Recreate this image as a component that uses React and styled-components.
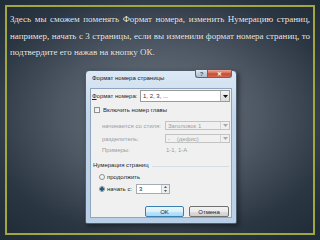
import React from "react"
import styled, { createGlobalStyle, css } from "styled-components"

const GlobalStyle = createGlobalStyle`
  html, body {
    margin: 0;
    padding: 0;
    background: #26313d;
  }
`

const Slide = styled.div`
  width: 320px;
  height: 240px;
  box-sizing: border-box;
  padding: 5px;
  background: radial-gradient(ellipse 70% 65% at 50% 48%, #6e7780 0%, #4e5864 45%, #2b3643 80%, #222d3a 100%);
`

const Frame = styled.div`
  height: 100%;
  box-sizing: border-box;
  border: 2px solid #a2a63e;
  padding: 4px 3px 0 3px;
`

const Paragraph = styled.p`
  margin: 0;
  font-family: "Liberation Serif", "Times New Roman", serif;
  font-size: 9px;
  line-height: 16.5px;
  text-align: justify;
  color: #ebebeb;
  text-shadow: 0 0 1px rgba(0, 0, 0, 0.5);
`

const Dialog = styled.div`
  margin: 9.5px 0 0 75px;
  width: 152px;
  height: 154px;
  box-sizing: border-box;
  display: flex;
  flex-direction: column;
  padding: 0 4px 5px 4px;
  border: 1px solid #4d5d6e;
  border-radius: 4px 4px 2px 2px;
  background: linear-gradient(180deg, #dce8f4 0%, #c3d6ea 30%, #b9cfe6 100%);
  box-shadow: 2px 2px 5px rgba(0, 0, 0, 0.45);
  font-family: "Liberation Sans", Arial, sans-serif;
  font-size: 6px;
  color: #1e1e1e;
`

const TitleBar = styled.div`
  height: 17px;
  display: flex;
  align-items: flex-start;
  justify-content: space-between;
`

const Title = styled.div`
  padding: 3px 0 0 2px;
  line-height: 8px;
  color: #1a1a1a;
`

const Caption = styled.div`
  display: flex;
  margin-top: -1px;
`

const CaptionButton = styled.div`
  height: 8px;
  box-sizing: border-box;
  display: flex;
  align-items: center;
  justify-content: center;
  border: 1px solid #5a6878;
  border-top: none;
  font-size: 6px;
  font-weight: bold;
  ${(p) =>
    p.$close
      ? css`
          width: 25px;
          border-radius: 0 0 3px 0;
          background: linear-gradient(180deg, #e9a99b 0%, #d46a55 45%, #c24a34 55%, #d7694f 100%);
          color: #fff;
        `
      : css`
          width: 12px;
          border-right: none;
          border-radius: 0 0 0 3px;
          background: linear-gradient(180deg, #e0e8f0 0%, #c2d0de 50%, #aebfd1 100%);
          color: #4a5866;
        `}
`

const Content = styled.div`
  flex: 1;
  border: 1px solid #8ea5bf;
  background: #f0f0f0;
  padding: 0 1px;
  display: flex;
  flex-direction: column;
`

const Row = styled.div`
  display: flex;
  align-items: center;
  height: ${(p) => p.$h}px;
  margin-top: ${(p) => p.$top}px;
  padding-left: ${(p) => p.$indent || 0}px;
  color: ${(p) => (p.$disabled ? "#9c9c9c" : "#1e1e1e")};
  white-space: nowrap;
`

const Label = styled.span`
  width: ${(p) => (p.$w ? `${p.$w}px` : "auto")};
  flex-shrink: 0;
`

const Combo = styled.div`
  margin-left: auto;
  width: ${(p) => p.$w}px;
  height: 100%;
  box-sizing: border-box;
  display: flex;
  align-items: center;
  border: 1px solid ${(p) => (p.$disabled ? "#c3c3c3" : "#9a9a9a")};
  background: ${(p) => (p.$disabled ? "#f0f0f0" : "#fff")};
  color: ${(p) => (p.$disabled ? "#a0a0a0" : "#333")};
  padding-left: 2px;
`

const ComboText = styled.span`
  flex: 1;
`

const ArrowBox = styled.div`
  width: 8px;
  height: 100%;
  display: flex;
  align-items: center;
  justify-content: center;
  border-left: 1px solid ${(p) => (p.$disabled ? "#d4d4d4" : "#b5b5b5")};
  background: ${(p) => (p.$disabled ? "#f0f0f0" : "linear-gradient(180deg, #f4f4f4, #dcdcdc)")};
`

const Check = styled.div`
  width: 6px;
  height: 6px;
  box-sizing: border-box;
  border: 1px solid #8e8f8f;
  background: linear-gradient(135deg, #e6e6e6, #ffffff);
  margin-right: 3px;
`

const Radio = styled.div`
  width: 6px;
  height: 6px;
  box-sizing: border-box;
  border-radius: 50%;
  border: 1px solid #8e8f8f;
  background: ${(p) => (p.$on ? "radial-gradient(circle, #1c5b8a 0 1.6px, #e8f0f6 2px)" : "#f4f4f4")};
  margin-right: 2px;
`

const GroupLine = styled.div`
  flex: 1;
  height: 1px;
  margin: 3px 1px 0 3px;
  background: #d5dde4;
`

const Spin = styled.div`
  margin-left: 4px;
  width: 34px;
  height: 100%;
  box-sizing: border-box;
  display: flex;
  border: 1px solid #a5acb5;
  background: #fff;
`

const SpinValue = styled.span`
  flex: 1;
  padding-left: 2px;
  line-height: 8px;
`

const SpinArrows = styled.div`
  width: 7px;
  display: flex;
  flex-direction: column;
  border-left: 1px solid #c8ccd0;
  background: #eceff2;
  & > svg {
    flex: 1;
  }
`

const Buttons = styled.div`
  display: flex;
  justify-content: flex-end;
  gap: 5px;
  margin-top: 12px;
  height: 11px;
  margin-right: 1px;
`

const Button = styled.div`
  width: ${(p) => p.$w}px;
  box-sizing: border-box;
  display: flex;
  align-items: center;
  justify-content: center;
  border-radius: 2px;
  border: 1px solid ${(p) => (p.$primary ? "#3c7fb1" : "#707070")};
  background: ${(p) =>
    p.$primary
      ? "linear-gradient(180deg, #eaf6fd 0%, #d9f0fc 50%, #bee6fd 51%, #a7d9f5 100%)"
      : "linear-gradient(180deg, #f2f2f2 0%, #ebebeb 50%, #dddddd 51%, #cfcfcf 100%)"};
  color: #1e1e1e;
`

const Arrow = ({ color = "#111" }) => (
  <svg width="5" height="3" viewBox="0 0 5 3">
    <polygon points="0,0 5,0 2.5,3" fill={color} />
  </svg>
)

export default function App() {
  return (
    <>
      <GlobalStyle />
      <Slide>
        <Frame>
          <Paragraph>
            Здесь мы сможем поменять Формат номера, изменить Нумерацию страниц, например, начать с 3 страницы, если вы
            изменили формат номера страниц, то подтвердите его нажав на кнопку ОК.
          </Paragraph>
          <Dialog>
            <TitleBar>
              <Title>Формат номера страницы</Title>
              <Caption>
                <CaptionButton>?</CaptionButton>
                <CaptionButton $close>✕</CaptionButton>
              </Caption>
            </TitleBar>
            <Content>
              <Row $top={1} $h={12}>
                <Label>
                  <u>Ф</u>ормат номера:
                </Label>
                <Combo $w={90}>
                  <ComboText>1, 2, 3, ...</ComboText>
                  <ArrowBox>
                    <Arrow />
                  </ArrowBox>
                </Combo>
              </Row>
              <Row $top={4} $h={8} $indent={2}>
                <Check />
                <span>Включить номер главы</span>
              </Row>
              <Row $top={7} $h={9} $indent={10} $disabled>
                <Label>начинается со стиля:</Label>
                <Combo $w={65} $disabled>
                  <ComboText>Заголовок 1</ComboText>
                  <ArrowBox $disabled>
                    <Arrow color="#a8a8a8" />
                  </ArrowBox>
                </Combo>
              </Row>
              <Row $top={4} $h={9} $indent={10} $disabled>
                <Label>разделитель:</Label>
                <Combo $w={65} $disabled>
                  <ComboText>-&nbsp;&nbsp;&nbsp;&nbsp;(дефис)</ComboText>
                  <ArrowBox $disabled>
                    <Arrow color="#a8a8a8" />
                  </ArrowBox>
                </Combo>
              </Row>
              <Row $top={3} $h={7} $indent={10} $disabled>
                <Label $w={64}>Примеры:</Label>
                <span>1-1, 1-A</span>
              </Row>
              <Row $top={8} $h={8} $indent={1}>
                <span>Нумерация страниц</span>
                <GroupLine />
              </Row>
              <Row $top={4} $h={7} $indent={7}>
                <Radio />
                <span>продолжить</span>
              </Row>
              <Row $top={4} $h={10} $indent={7}>
                <Radio $on />
                <Label $w={25}>начать с:</Label>
                <Spin>
                  <SpinValue>3</SpinValue>
                  <SpinArrows>
                    <svg viewBox="0 0 7 4" width="7" height="4">
                      <polygon points="2,3 5,3 3.5,1" fill="#555" />
                    </svg>
                    <svg viewBox="0 0 7 4" width="7" height="4">
                      <polygon points="2,1 5,1 3.5,3" fill="#555" />
                    </svg>
                  </SpinArrows>
                </Spin>
              </Row>
              <Buttons>
                <Button $primary $w={39}>
                  OK
                </Button>
                <Button $w={40}>Отмена</Button>
              </Buttons>
            </Content>
          </Dialog>
        </Frame>
      </Slide>
    </>
  )
}
